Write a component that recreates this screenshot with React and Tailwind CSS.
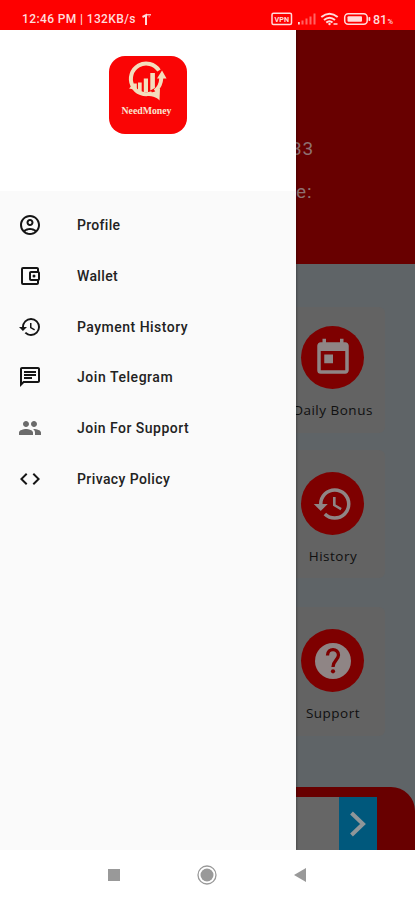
import {
  MdOutlineAccountCircle,
  MdOutlineAccountBalanceWallet,
  MdHistory,
  MdOutlineChat,
  MdPeople,
  MdCode,
  MdToday,
} from "react-icons/md";

const menu = [
  { label: "Profile", Icon: MdOutlineAccountCircle, color: "text-[#151515]", track: "tracking-[0.3px]" },
  { label: "Wallet", Icon: MdOutlineAccountBalanceWallet, color: "text-[#151515]", track: "tracking-[0.35px]" },
  { label: "Payment History", Icon: MdHistory, color: "text-[#151515]", track: "tracking-[0.48px]" },
  { label: "Join Telegram", Icon: MdOutlineChat, color: "text-[#151515]", track: "tracking-[0.55px]" },
  { label: "Join For Support", Icon: MdPeople, color: "text-[#6b6b6b]", track: "tracking-[0.48px]" },
  { label: "Privacy Policy", Icon: MdCode, color: "text-[#151515]", track: "tracking-[0.4px]" },
];

function HelpIcon({ className }) {
  return (
    <svg className={className} viewBox="0 0 42 42">
      <circle cx="21" cy="21" r="18" fill="currentColor" />
      <path d="M15.500 15.500C15.500 7.500 26.500 7.800 26.500 15C26.500 20 21 20.500 21 27" fill="none" stroke="#7e0000" strokeWidth="3.300" />
      <circle cx="21" cy="31.300" r="2.100" fill="#7e0000" />
    </svg>
  );
}

function StatusBar() {
  return (
    <header className="flex h-[30px] shrink-0 items-center justify-between bg-[#fe0000] pt-2 pr-[21px] pl-[22px] font-['Roboto',sans-serif] text-[12px] font-medium text-[#ffdcdc]">
      <div className="flex items-center gap-[6px]">
        <span className="tracking-[0.38px] whitespace-nowrap">12:46 PM | 132KB/s</span>
        <svg width="11" height="13" viewBox="0 0 11 13" fill="none" stroke="#ffdcdc" strokeWidth="2">
          <path d="M.5 4 4 2.200V12" />
          <path d="M4.500 1.800H9" strokeWidth="1.300" />
          <path d="M6.500 3.800H8" strokeWidth="1" strokeOpacity=".6" />
        </svg>
      </div>
      <svg width="123" height="16" viewBox="271 11 123 16">
        <rect x="272" y="13.200" width="19.500" height="11.300" rx="1.500" fill="none" stroke="#ffdcdc" strokeWidth="1.500" />
        <text x="274.500" y="21.800" fontSize="7.500" fontWeight="700" fontFamily="Roboto, sans-serif" fill="#ffdcdc" textLength="14.500" lengthAdjust="spacingAndGlyphs">VPN</text>
        <path d="M298 24.500v-2.500h1.800v2.500z" fill="#ffdcdc" />
        <path d="M302.500 24.500v-4M306.500 24.500v-6M310.500 24.500v-8M314.500 24.500v-11" stroke="#ff6464" strokeWidth="2" />
        <g fill="none" stroke="#ffdcdc" strokeWidth="2">
          <path d="M321.300 17Q329.500 10.400 337.700 17" />
          <path d="M324 20Q329.500 15.400 335 20" />
          <path d="M326.300 22.600Q329.500 20 332.500 22.600" />
        </g>
        <circle cx="329.500" cy="24" r="1.200" fill="#ffdcdc" />
        <path d="M333.500 24h4" stroke="#ffdcdc" strokeWidth="1.500" />
        <rect x="344.700" y="13.700" width="22.500" height="10.600" rx="3.500" fill="none" stroke="#ffdcdc" strokeWidth="1.500" />
        <rect x="347.500" y="16.200" width="14.500" height="5.600" rx="1" fill="#ffdcdc" />
        <rect x="368.500" y="17" width="1.800" height="4" rx=".8" fill="#ffdcdc" />
        <text x="373" y="23.500" fontSize="12.500" fontWeight="500" fontFamily="Roboto, sans-serif" fill="#ffdcdc">81</text>
        <text x="387.500" y="23.500" fontSize="7.500" fontFamily="Roboto, sans-serif" fill="#ffdcdc">%</text>
      </svg>
    </header>
  );
}

function Logo() {
  return (
    <svg className="h-[78px] w-[78px]" viewBox="0 0 78 78">
      <rect width="78" height="78" rx="16" fill="#fa0505" />
      <g fill="none" stroke="#f3dfbd" strokeWidth="4">
        <path d="M50 14.500A15.300 15.300 0 1 0 43 37" />
        <path d="M52.300 22C52 28 50 32 46 35" />
      </g>
      <path d="M53 14.500 57.500 22.500 48 22.500Z" fill="#f3dfbd" />
      <path d="M33 36C40 38 46 36.500 51 32.500L50.500 44.500C48 41 42 39.800 35 39.500Z" fill="#f3dfbd" />
      <path d="M20 32.500l5-5h2.800v6.500zM29 26.500h3.700v9.500l-3.700-.8zM34.800 22.500h4.200v13.500H34.800zM41.300 17h4.600v15l-4.600 2.500z" fill="#f3dfbd" />
      <text x="12.500" y="58" fontSize="10" fontWeight="700" fontFamily="Liberation Serif, serif" fill="#f9e4d0" textLength="50" lengthAdjust="spacingAndGlyphs">NeedMoney</text>
    </svg>
  );
}

function Drawer() {
  return (
    <aside className="absolute top-0 left-0 flex h-full w-[296px] flex-col bg-[#fafafa] shadow-[1px_0_2px_rgba(0,0,0,0.3)]">
      <div className="flex h-[161px] shrink-0 justify-center bg-white pt-[26px]">
        <Logo />
      </div>
      <nav className="flex flex-col pt-[9px]">
        {menu.map(({ label, Icon, color, track }) => (
          <a key={label} className="flex h-[50.7px] items-center gap-[35px] pl-[18px]">
            <Icon className={`h-6 w-6 shrink-0 ${color}`} />
            <span className={`pt-px font-['Roboto',sans-serif] text-[14px] font-medium whitespace-nowrap text-[#222222] ${track}`}>
              {label}
            </span>
          </a>
        ))}
      </nav>
    </aside>
  );
}

function Tile({ label, Icon, box }) {
  return (
    <div className={`flex w-[105px] shrink-0 flex-col items-center rounded-md bg-[#636363] ${box}`}>
      <div className="flex h-[63px] w-[63px] shrink-0 items-center justify-center rounded-full bg-[#7e0000]">
        <Icon className="h-[42px] w-[42px] text-[#8f8585]" />
      </div>
      <span className="mt-[11px] ml-px font-['Open_Sans',sans-serif] text-[13.5px] leading-5 font-medium tracking-[0.5px] whitespace-nowrap text-[#101010]">
        {label}
      </span>
    </div>
  );
}

function Page() {
  return (
    <main className="flex h-full flex-col bg-[#5f6467]">
      <section className="flex h-[234px] shrink-0 flex-col bg-[#680000] pt-[107px] pl-[291px] font-['Roboto',sans-serif] text-[19px] leading-6 tracking-[0.8px] text-[#8e7070]">
        <span>33</span>
        <span className="mt-[19px] pl-[5px]">e:</span>
      </section>
      <section className="flex flex-1 flex-col items-end pt-[43px] pr-[30px]">
        <Tile label="Daily Bonus" Icon={MdToday} box="h-[126px] pt-[19px]" />
        <Tile label="History" Icon={MdHistory} box="mt-[17px] h-[128px] pt-[22px]" />
        <Tile label="Support" Icon={HelpIcon} box="mt-[29px] h-[129px] pt-[22px]" />
      </section>
      <section className="flex h-[63px] shrink-0 items-end justify-end rounded-tr-[24px] bg-[#680000] pr-[38px]">
        <div className="h-[53px] w-[200px] bg-[#666666]" />
        <div className="flex h-[53px] w-[38px] items-center justify-center bg-[#00587c]">
          <svg width="18" height="26" viewBox="0 0 18 26" fill="none" stroke="#8f9699" strokeWidth="4">
            <path d="M2.500 2 14 13 2.500 24" />
          </svg>
        </div>
      </section>
    </main>
  );
}

export default function App() {
  return (
    <div className="flex h-[900px] w-[415px] flex-col overflow-hidden bg-white">
      <StatusBar />
      <div className="relative h-[820px] shrink-0 overflow-hidden">
        <Page />
        <Drawer />
      </div>
      <footer className="flex flex-1 items-center justify-between pr-[108px] pl-[108px]">
        <div className="h-3 w-3 bg-[#999999]" />
        <svg width="20" height="20" viewBox="0 0 20 20">
          <circle cx="10" cy="10" r="9" fill="none" stroke="#999999" strokeWidth="1.300" />
          <circle cx="10" cy="10" r="6.500" fill="#999999" />
        </svg>
        <svg width="13" height="14" viewBox="0 0 13 14">
          <path d="M0 7 12 0V14Z" fill="#999999" />
        </svg>
      </footer>
    </div>
  );
}
